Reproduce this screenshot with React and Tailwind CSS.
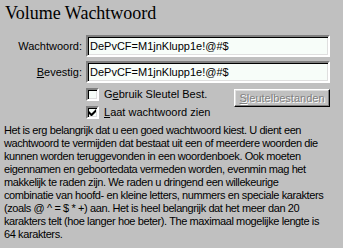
export default function App() {
  const sunken =
    'border-2 border-t-[#808080] border-l-[#808080] border-b-white border-r-white shadow-[inset_1px_1px_0_#000,inset_-1px_-1px_0_#dfdfdf] bg-[#f7fdf9]';

  const lines = [
    'Het is erg belangrijk dat u een goed wachtwoord kiest. U dient een',
    'wachtwoord te vermijden dat bestaat uit een of meerdere woorden die',
    'kunnen worden teruggevonden in een woordenboek. Ook moeten',
    'eigennamen en geboortedata vermeden worden, evenmin mag het',
    'makkelijk te raden zijn. We raden u dringend een willekeurige',
    'combinatie van hoofd- en kleine letters, nummers en speciale karakters',
    '(zoals @ ^ = $ * +) aan. Het is heel belangrijk dat het meer dan 20',
    'karakters telt (hoe langer hoe beter). The maximaal mogelijke lengte is',
    '64 karakters.',
  ];

  return (
    <div className="w-[343px] h-[248px] overflow-hidden bg-[#c0c0c0] text-black text-[11px] font-['Liberation_Sans',Arial,sans-serif]">
      {/* Title */}
      <h1 className="pt-[2px] pl-[5px] leading-[22px] text-[18px] font-['Liberation_Serif','Times_New_Roman',serif]">
        Volume Wachtwoord
      </h1>

      {/* Password fields */}
      <div className="mt-[11px] grid grid-cols-[86px_244px] gap-y-[4px]">
        <div className="flex items-center justify-end pr-[4px]">Wachtwoord:</div>
        <div className={`h-[22px] flex items-center pl-[2px] ${sunken}`}>DePvCF=M1jnKlupp1e!@#$</div>
        <div className="flex items-center justify-end pr-[4px]">
          <span>
            <span className="underline">B</span>evestig:
          </span>
        </div>
        <div className={`h-[22px] flex items-center pl-[2px] ${sunken}`}>DePvCF=M1jnKlupp1e!@#$</div>
      </div>

      {/* Options */}
      <div className="mt-[5px] w-[330px] flex pl-[86px]">
        <div className="flex flex-col gap-[5px]">
          <label className="flex items-center gap-[5px] h-[13px]">
            <span className={`w-[13px] h-[13px] ${sunken}`} />
            <span>
              G<span className="underline">e</span>bruik Sleutel Best.
            </span>
          </label>
          <label className="flex items-center gap-[5px] h-[13px]">
            <span className={`w-[13px] h-[13px] flex items-center justify-center ${sunken}`}>
              <svg width="7" height="7" viewBox="0 0 7 7">
                <path d="M0 2v3l2 2h1l4-4V0L2.5 4.5z" fill="#000" />
              </svg>
            </span>
            <span>
              <span className="underline">L</span>aat wachtwoord zien
            </span>
          </label>
        </div>
        <div className="ml-auto mt-[1px] w-[96px] h-[18px] flex items-center justify-center border border-t-white border-l-white border-b-black border-r-black shadow-[inset_-1px_-1px_0_#808080,inset_1px_1px_0_#dfdfdf] text-[#808080] [text-shadow:1px_1px_0_#fff]">
          <span>
            <span className="underline">S</span>leutelbestanden
          </span>
        </div>
      </div>

      {/* Explanation */}
      <div className="mt-[5px] pl-[4px] leading-[13px] tracking-[-0.4px]">
        {lines.map((l, i) => (
          <div key={i} className="whitespace-nowrap">
            {l}
          </div>
        ))}
      </div>
    </div>
  );
}
